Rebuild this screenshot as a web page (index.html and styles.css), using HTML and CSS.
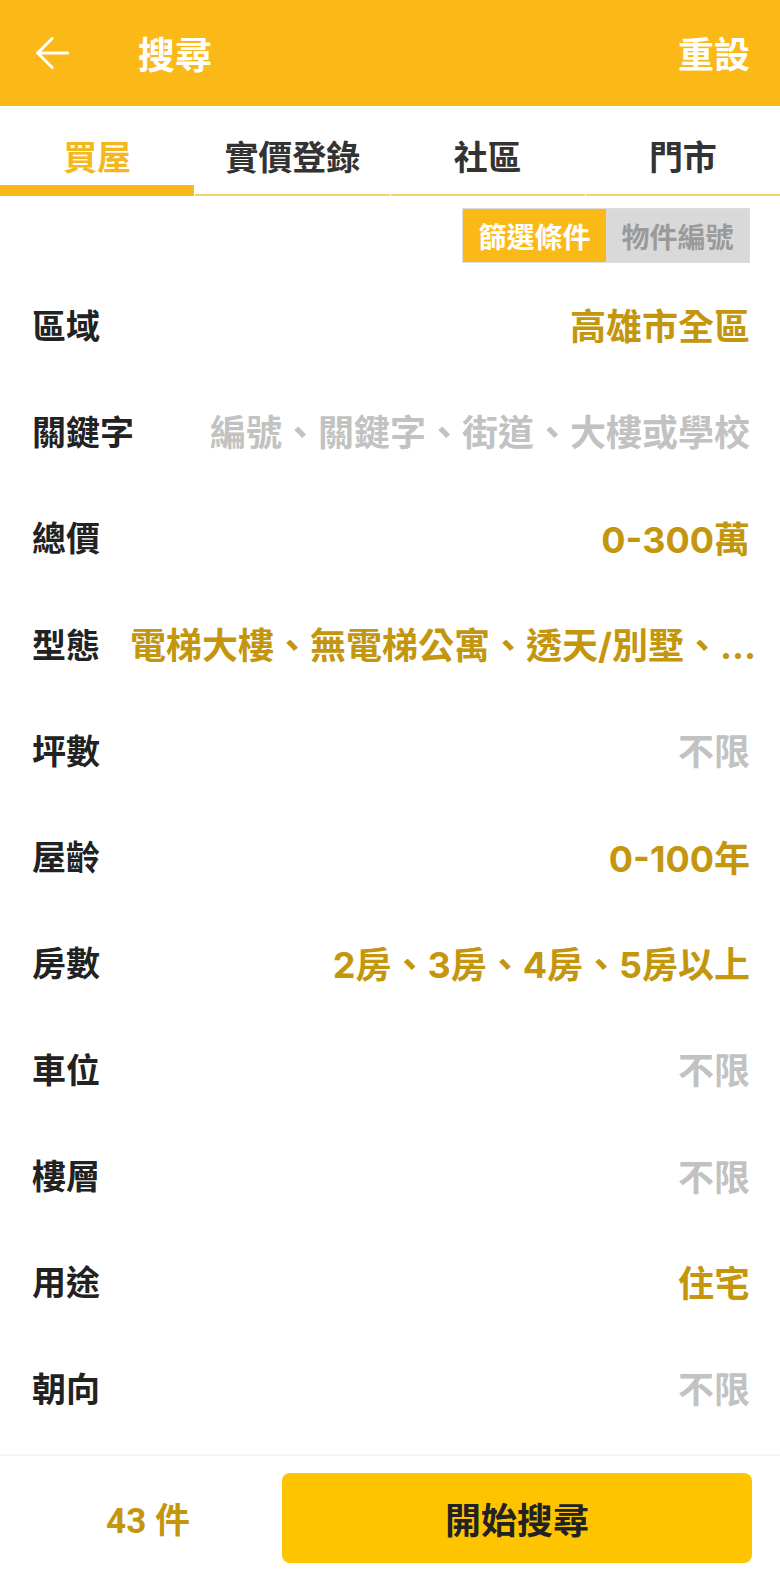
FILE: index.html
```html
<!DOCTYPE html>
<html lang="zh-Hant">

<head>
	<meta charset="UTF-8">
	<title>搜尋</title>
	<link rel="stylesheet" href="styles.css">
</head>

<body>
	<div class="page">
		<header class="topbar">
			<svg class="back" width="40" height="40" viewBox="0 0 24 24" fill="none" stroke="#fff" stroke-width="1.8" stroke-linecap="round" stroke-linejoin="round">
				<path d="M22 12H4"></path>
				<path d="M12.7 3.3L4 12l8.7 8.7"></path>
			</svg>
			<div class="title">搜尋</div>
			<div class="reset">重設</div>
		</header>

		<nav class="tabs">
			<div class="tab active">買屋</div>
			<div class="tab">實價登錄</div>
			<div class="tab">社區</div>
			<div class="tab">門市</div>
		</nav>

		<div class="switch-row">
			<div class="switch">
				<div class="switch-item on">篩選條件</div>
				<div class="switch-item">物件編號</div>
			</div>
		</div>

		<div class="filters">
			<div class="row"><span class="label">區域</span><span class="value">高雄市全區</span></div>
			<div class="row"><span class="label">關鍵字</span><span class="value empty">編號、關鍵字、街道、大樓或學校</span></div>
			<div class="row"><span class="label">總價</span><span class="value">0-300萬</span></div>
			<div class="row"><span class="label">型態</span><span class="value">電梯大樓、無電梯公寓、透天/別墅、...</span></div>
			<div class="row"><span class="label">坪數</span><span class="value empty">不限</span></div>
			<div class="row"><span class="label">屋齡</span><span class="value">0-100年</span></div>
			<div class="row"><span class="label">房數</span><span class="value">2房、3房、4房、5房以上</span></div>
			<div class="row"><span class="label">車位</span><span class="value empty">不限</span></div>
			<div class="row"><span class="label">樓層</span><span class="value empty">不限</span></div>
			<div class="row"><span class="label">用途</span><span class="value">住宅</span></div>
			<div class="row"><span class="label">朝向</span><span class="value empty">不限</span></div>
		</div>

		<footer class="bottombar">
			<div class="count">43 件</div>
			<div class="search-btn">開始搜尋</div>
		</footer>
	</div>
</body>

</html>
```

FILE: styles.css
```css
body {
	margin: 0;
	padding: 0;
	background-color: #fff;
	font-family: Roboto, "Noto Sans CJK TC", sans-serif;
	font-weight: bold;
	color: #222;
}

.page {
	width: 780px;
	height: 1579px;
	display: flex;
	flex-direction: column;
	overflow: hidden;
}

.topbar {
	height: 106px;
	background-color: #fbb917;
	display: flex;
	align-items: center;
	padding: 6px 30px 0 31px;
	box-sizing: border-box;
	color: #fff;
	flex-shrink: 0;
}

.back {
	margin-top: -6px;
	margin-right: 67px;
}

.title {
	font-size: 37px;
	line-height: 1;
	flex: 1;
}

.reset {
	font-size: 36px;
	line-height: 1;
}

.tabs {
	display: flex;
	height: 90px;
	gap: 1px;
	flex-shrink: 0;
}

.tab {
	flex: 1;
	display: flex;
	align-items: center;
	justify-content: center;
	font-size: 34px;
	color: #333;
	border-bottom: 2px solid #f6d264;
	padding-top: 10px;
}

.tab.active {
	color: #f5b71e;
	border-bottom: 11px solid #fbb917;
	padding-top: 19px;
}

.switch-row {
	display: flex;
	justify-content: flex-end;
	padding: 12px 30px 0 0;
	flex-shrink: 0;
}

.switch {
	display: flex;
	height: 53px;
	border: 1px solid #ddd;
	background-color: #d9d9d9;
}

.switch-item {
	width: 143px;
	display: flex;
	align-items: center;
	justify-content: center;
	font-size: 28px;
	color: #9a9a9a;
}

.switch-item.on {
	background-color: #fbb917;
	color: #fff;
}

.filters {
	padding-top: 8px;
	flex: 1;
}

.row {
	height: 106.3px;
	display: flex;
	align-items: center;
	justify-content: space-between;
	padding: 0 30px 0 32px;
}

.label {
	font-size: 34px;
	color: #222;
	white-space: nowrap;
	margin-right: 30px;
}

.value {
	font-family: Inter, "Noto Sans CJK TC", sans-serif;
	font-size: 36px;
	color: #c4960e;
	white-space: nowrap;
}

.value.empty {
	color: #c2c2c2;
}

.bottombar {
	height: 123px;
	border-top: 2px solid #f5f5f5;
	display: flex;
	align-items: center;
	padding: 0 28px 0 0;
	flex-shrink: 0;
}

.count {
	width: 282px;
	text-align: center;
	font-size: 35px;
	color: #c4960e;
	padding-left: 14px;
	box-sizing: border-box;
}

.search-btn {
	flex: 1;
	height: 90px;
	background-color: #ffc400;
	border-radius: 8px;
	display: flex;
	align-items: center;
	justify-content: center;
	font-size: 36px;
	color: #222;
}
```
